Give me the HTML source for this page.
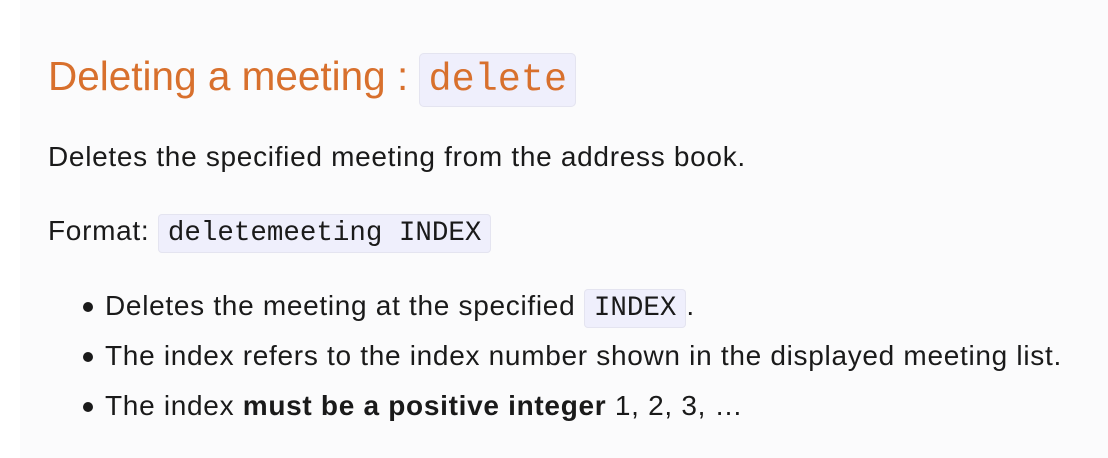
<!DOCTYPE html>
<html><head><style>
body{margin:0;width:1108px;height:458px;background:#fff;font-family:"Liberation Sans",Helvetica,sans-serif;color:#1a1a1a;overflow:hidden}
.main{position:absolute;left:20px;top:0;right:0;bottom:0;background:#fbfbfc}
.t{position:absolute;left:48px;white-space:nowrap;font-size:28px;letter-spacing:0.7px}
code{font-family:"Liberation Mono",monospace;background:#efeffc;border:1px solid #e4e4f0;border-radius:4px;padding:3px 9px;font-size:27.5px;letter-spacing:0}
h1{position:absolute;left:48px;top:53px;margin:0;font-weight:normal;color:#d8702d;font-size:40.5px;white-space:nowrap}
h1 code{color:#d8702d;font-size:38.5px;padding:4px 8px;border-radius:5px}
.b{position:absolute;left:83px;width:10px;height:10px;border-radius:50%;background:#1a1a1a}
</style></head><body>
<div class="main"></div>
<h1>Deleting a meeting : <code>delete</code></h1>
<div class="t" style="top:141px">Deletes the specified meeting from the address book.</div>
<div class="t" style="top:215px">Format: <code>deletemeeting INDEX</code></div>
<div class="b" style="top:302px"></div>
<div class="t" style="left:105px;top:290px">Deletes the meeting at the specified <code>INDEX</code>.</div>
<div class="b" style="top:352px"></div>
<div class="t" style="left:105px;top:340px">The index refers to the index number shown in the displayed meeting list.</div>
<div class="b" style="top:402px"></div>
<div class="t" style="left:105px;top:390px">The index <b>must be a positive integer</b> 1, 2, 3, …</div>
</body></html>
